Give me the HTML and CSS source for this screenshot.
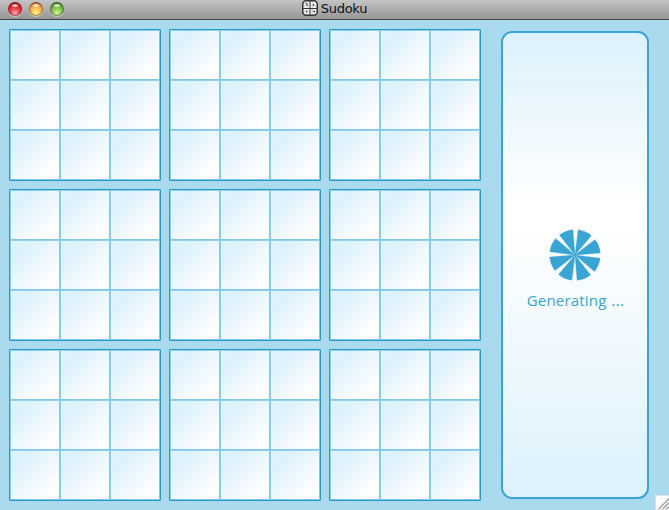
FILE: index.html
```html
<!DOCTYPE html>
<html lang="en">
<head>
<meta charset="utf-8">
<title>Sudoku</title>
<link rel="stylesheet" href="styles.css">
</head>
<body>
<header class="titlebar">
  <div class="lights"><span class="light red"></span><span class="light amber"></span><span class="light green"></span></div>
  <div class="caption">
    <svg class="app-icon" width="16" height="16" viewBox="0 0 16 16">
      <rect x=".75" y=".75" width="14.5" height="14.5" rx="3.500" fill="#eee" stroke="#333" stroke-width="1.5"/>
      <path d="M8 1v14M1 8.500h14" stroke="#333" stroke-width="1"/>
      <path d="M3.500 3.500h1.500v2.500M11.500 4v2M4.500 10.500v2M11 11h1.500v1.500" stroke="#444" fill="none"/>
      <path d="M1 5.500h14M1 11.500h14M5.500 1v14M10.500 1v14" stroke="#888" stroke-width=".4" opacity=".6"/>
    </svg>
    <span class="title">Sudoku</span>
  </div>
</header>
<main class="content">
  <div class="board" id="board"></div>
  <aside class="panel">
    <svg class="wheel" width="52" height="52" viewBox="-26 -26 52 52">
      <defs><path id="wedge" d="M0 0L2.500-25.250A25.400 25.400 0 0 1 15.900-19.800Z"/></defs>
      <g fill="#3aa5d3" stroke="#3aa5d3" stroke-width=".3" transform="rotate(1.500)">
        <use href="#wedge"/><use href="#wedge" transform="rotate(45)"/><use href="#wedge" transform="rotate(90)"/><use href="#wedge" transform="rotate(135)"/><use href="#wedge" transform="rotate(180)"/><use href="#wedge" transform="rotate(225)"/><use href="#wedge" transform="rotate(270)"/><use href="#wedge" transform="rotate(315)"/>
      </g>
    </svg>
    <p class="status">Generating <span class="dots">…</span></p>
  </aside>
  <svg class="grip" width="14" height="15" viewBox="0 0 14 15">
    <rect width="14" height="15" fill="#d9e3e8"/><rect x="1" y="1" width="13" height="14" fill="#fff"/>
    <path d="M3 14.500L14 3.500M7 14.500L14 7.500M11 14.500L14 11.500" stroke="#555" stroke-width="1"/>
    <path d="M4.200 14.500L14 4.700M8.200 14.500L14 8.700" stroke="#ccc" stroke-width=".8"/>
  </svg>
</main>
<script src="board.js"></script>
</body>
</html>
```
FILE: board.js
```js
const board = document.getElementById('board');
for (let b = 0; b < 9; b++) {
  const block = document.createElement('div');
  block.className = 'block';
  for (let c = 0; c < 9; c++) {
    const cell = document.createElement('div');
    cell.className = 'cell';
    block.append(cell);
  }
  board.append(block);
}
```
FILE: styles.css
```css
* { box-sizing: border-box; }
body {
  margin: 0;
  width: 669px;
  height: 510px;
  overflow: hidden;
  display: flex;
  flex-direction: column;
  background: #a9daed;
  font-family: "Open Sans", "Noto Sans", sans-serif;
}
.titlebar {
  position: relative;
  height: 20px;
  flex: none;
  display: flex;
  justify-content: center;
  background: linear-gradient(#c4c4c4, #969696);
  border-bottom: 1px solid #444;
}
.lights {
  position: absolute;
  left: 8px;
  top: 2px;
  display: flex;
  gap: 7px;
}
.light {
  width: 14px;
  height: 14px;
  border-radius: 50%;
  box-shadow: inset 0 0 1px 1px rgba(50, 20, 15, .45), 0 1px 0 rgba(255, 255, 255, .45);
}
.red {
  background: radial-gradient(ellipse 4px 2px at 50% 26%, #fff 0, rgba(255, 255, 255, .5) 60%, transparent), radial-gradient(circle at 50% 80%, #ffb0b0 0, #f04550 35%, #cf1622 68%, #63131a 100%);
}
.amber {
  background: radial-gradient(ellipse 4px 2px at 50% 26%, #fff 0, rgba(255, 255, 255, .5) 60%, transparent), radial-gradient(circle at 50% 80%, #fff69a 0, #fdc75a 35%, #e58a32 68%, #6c3514 100%);
}
.green {
  background: radial-gradient(ellipse 4px 2px at 50% 26%, #fff 0, rgba(255, 255, 255, .5) 60%, transparent), radial-gradient(circle at 50% 80%, #d4f8a0 0, #8dcc58 35%, #55a02c 68%, #204a14 100%);
}
.caption {
  display: flex;
  gap: 3px;
}
.title {
  font: 13px/18px "DejaVu Sans", sans-serif;
  letter-spacing: -.3px;
  color: #111;
}
.content {
  position: relative;
  flex: 1;
  display: flex;
  padding: 9px 20px 9px 9px;
}
.board {
  display: grid;
  grid-template-columns: repeat(3, 152px);
  grid-template-rows: repeat(3, 152px);
  gap: 8px;
}
.block {
  display: grid;
  grid-template-columns: repeat(3, 50px);
  grid-template-rows: repeat(3, 50px);
  border: 1px solid #249acb;
  border-radius: 1px;
}
.cell {
  border: 1px solid;
  border-color: #92d1eb #80c8e6 #80c8e6 #92d1eb;
  background: linear-gradient(135deg, #dff2fd 0%, #dcf1fc 20%, #fff 85%);
}
.panel {
  width: 148px;
  height: 468px;
  margin: 2px 0 0 20px;
  display: flex;
  flex-direction: column;
  align-items: center;
  padding-top: 196px;
  border: 2px solid #3aa5d3;
  border-radius: 11px;
  background: linear-gradient(#dcf1fc, #fff 38%, #fff 41%, #dcf1fc);
}
.status {
  margin: 9px 0 0;
  font-size: 15px;
  line-height: 20px;
  letter-spacing: .2px;
  white-space: nowrap;
  color: #3aa5d3;
}
.dots {
  display: inline-block;
  margin-left: 1px;
  letter-spacing: 0;
  transform: scaleX(1.15);
}
.grip {
  position: absolute;
  right: 0;
  bottom: 0;
}
```
